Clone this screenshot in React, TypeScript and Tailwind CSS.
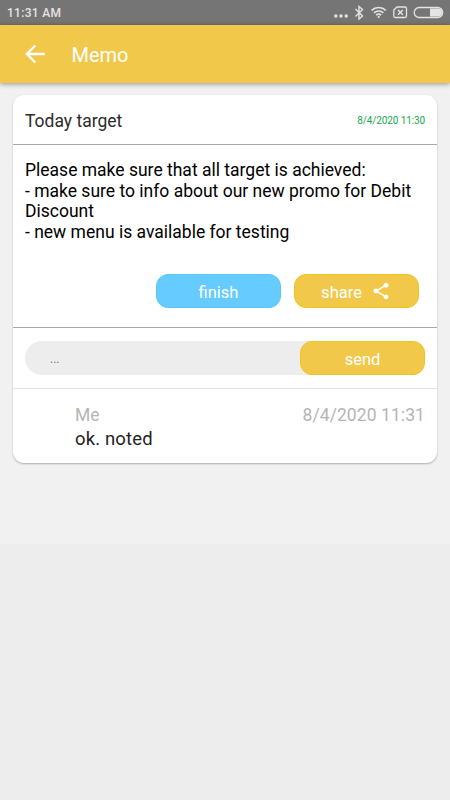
import * as React from 'react';

function StatusBar() {
  return (
    <div className="h-[25px] flex items-center bg-[#757575] pl-[7px] pr-[6px] text-[#e4e4e4]">
      <span className="mt-px text-[12px] leading-none font-medium tracking-[0.3px]">11:31 AM</span>
      <div className="flex-1" />
      <svg width="116" height="25" viewBox="0 0 116 25" fill="none" stroke="currentColor">
        <g fill="currentColor" stroke="none">
          <circle cx="7.8" cy="16" r="1.7" />
          <circle cx="13" cy="16" r="1.7" />
          <circle cx="18.2" cy="16" r="1.7" />
        </g>
        <path d="M27.5 9l7 7-3.5 3V6.5l3.5 3-7 7" strokeWidth="1.4" />
        <path d="M43.6 10.4a10.2 10.2 0 0 1 14.2 0M46 12.9a6.8 6.8 0 0 1 9.4 0M48.2 15.2a3.7 3.7 0 0 1 5 0" strokeWidth="1.6" />
        <circle cx="50.7" cy="17" r="1.1" fill="currentColor" stroke="none" />
        <path d="M69 7h8a1.5 1.5 0 0 1 1.5 1.5v7.500a1.500 1.500 0 0 1-1.500 1.500H67.300a1.500 1.500 0 0 1-1.500-1.500v-6z" strokeWidth="1.300" />
        <path d="M70 10l4.800 4.800M74.800 10l-4.800 4.800" strokeWidth="1.500" />
        <rect x="86.200" y="7.500" width="28.500" height="10" rx="5" strokeWidth="1.300" />
        <path d="M102 8.500h8a4 4 0 0 1 0 8h-8z" fill="currentColor" stroke="none" />
      </svg>
    </div>
  );
}

function AppBar({ title }: { title: string }) {
  return (
    <header className="h-[58px] flex items-center bg-[#f2c84b] pl-[21px] text-white shadow-[0_1px_5px_rgba(0,0,0,0.4)]">
      <svg width="28" height="28" viewBox="0 0 24 24" fill="currentColor" aria-label="Back">
        <path d="M20.3 11H7.4l5.590-5.590L11.600 4l-8 8 8 8 1.410-1.410L7.400 13H20.300v-2z" />
      </svg>
      <h1 className="ml-[22.5px] mt-[2px] text-[20px] leading-none">{title}</h1>
    </header>
  );
}

interface PillButtonProps {
  className?: string;
  children: React.ReactNode;
}

function PillButton({ className = 'bg-[#f2c84b] border-[#efc51d]', children }: PillButtonProps) {
  return (
    <button className={`w-[125px] h-[34px] flex flex-shrink-0 items-center justify-center rounded-[12px] border pt-[4px] text-[16.5px] leading-none text-white ${className}`}>
      {children}
    </button>
  );
}

function IconShare() {
  return (
    <svg className="-mt-[4px] ml-[9px] mr-px" width="20" height="20" viewBox="0 0 24 24" fill="currentColor">
      <path d="M18 16.080c-.760 0-1.440.300-1.960.770L8.910 12.700c.050-.230.090-.460.090-.700s-.040-.470-.090-.700l7.050-4.110c.540.500 1.250.810 2.040.810 1.660 0 3-1.340 3-3s-1.340-3-3-3-3 1.340-3 3c0 .240.040.470.090.700L8.040 9.810C7.500 9.310 6.790 9 6 9c-1.660 0-3 1.340-3 3s1.340 3 3 3c.790 0 1.500-.310 2.040-.810l7.120 4.160c-.050.210-.080.430-.080.650 0 1.610 1.310 2.920 2.920 2.920s2.920-1.310 2.920-2.920-1.310-2.920-2.920-2.920z" />
    </svg>
  );
}

function MemoCard() {
  return (
    <article className="mx-[13px] mt-3 h-[368px] flex flex-col rounded-[11px] bg-white shadow-[0_1px_2px_rgba(0,0,0,0.28)]">
      <div className="h-[50px] flex items-center justify-between border-b border-[#a9a9a9] px-3">
        <h2 className="mt-[4px] text-[17.5px] leading-none text-[#2b2b2b]">Today target</h2>
        <time className="mt-[2px] text-[10px] leading-none tracking-[-0.12px] text-[#18a84b]">8/4/2020 11:30</time>
      </div>
      <div className="h-[183px] flex flex-col border-b border-[#a9a9a9] px-3 pt-[15px]">
        <p className="whitespace-pre text-[17.5px] leading-[20.5px] text-black">
          {'Please make sure that all target is achieved:\n- make sure to info about our new promo for Debit\nDiscount\n- new menu is available for testing'}
        </p>
        <div className="mt-[32px] mr-[6px] flex justify-end gap-[13px]">
          <PillButton className="bg-[#66ccff] border-[#5cc7fc]">finish</PillButton>
          <PillButton>
            share
            <IconShare />
          </PillButton>
        </div>
      </div>
      <div className="h-[61px] flex items-center border-b border-[#e2e2e2] px-3">
        <div className="h-[34px] flex-1 flex items-center justify-between rounded-l-[17px] rounded-r-[14px] bg-[#ededed] pl-[25px]">
          <span className="mt-px text-[12px] leading-none text-[#757575]">...</span>
          <PillButton>send</PillButton>
        </div>
      </div>
      <div className="flex flex-col pl-[62px] pr-3 pt-[15px]">
        <div className="flex justify-between text-[17.5px] leading-[22px] text-[#b5b5b5]">
          <span>Me</span>
          <time className="tracking-[0.08px]">8/4/2020 11:31</time>
        </div>
        <p className="mt-px text-[18.5px] leading-[24px] tracking-[0.15px] text-[#222]">ok. noted</p>
      </div>
    </article>
  );
}

export default function App() {
  return (
    <div className="w-[450px] h-[800px] overflow-hidden bg-[#ededed] font-['Roboto',sans-serif]">
      <div className="h-[544px] bg-[#f1f1f1]">
        <StatusBar />
        <AppBar title="Memo" />
        <MemoCard />
      </div>
    </div>
  );
}
